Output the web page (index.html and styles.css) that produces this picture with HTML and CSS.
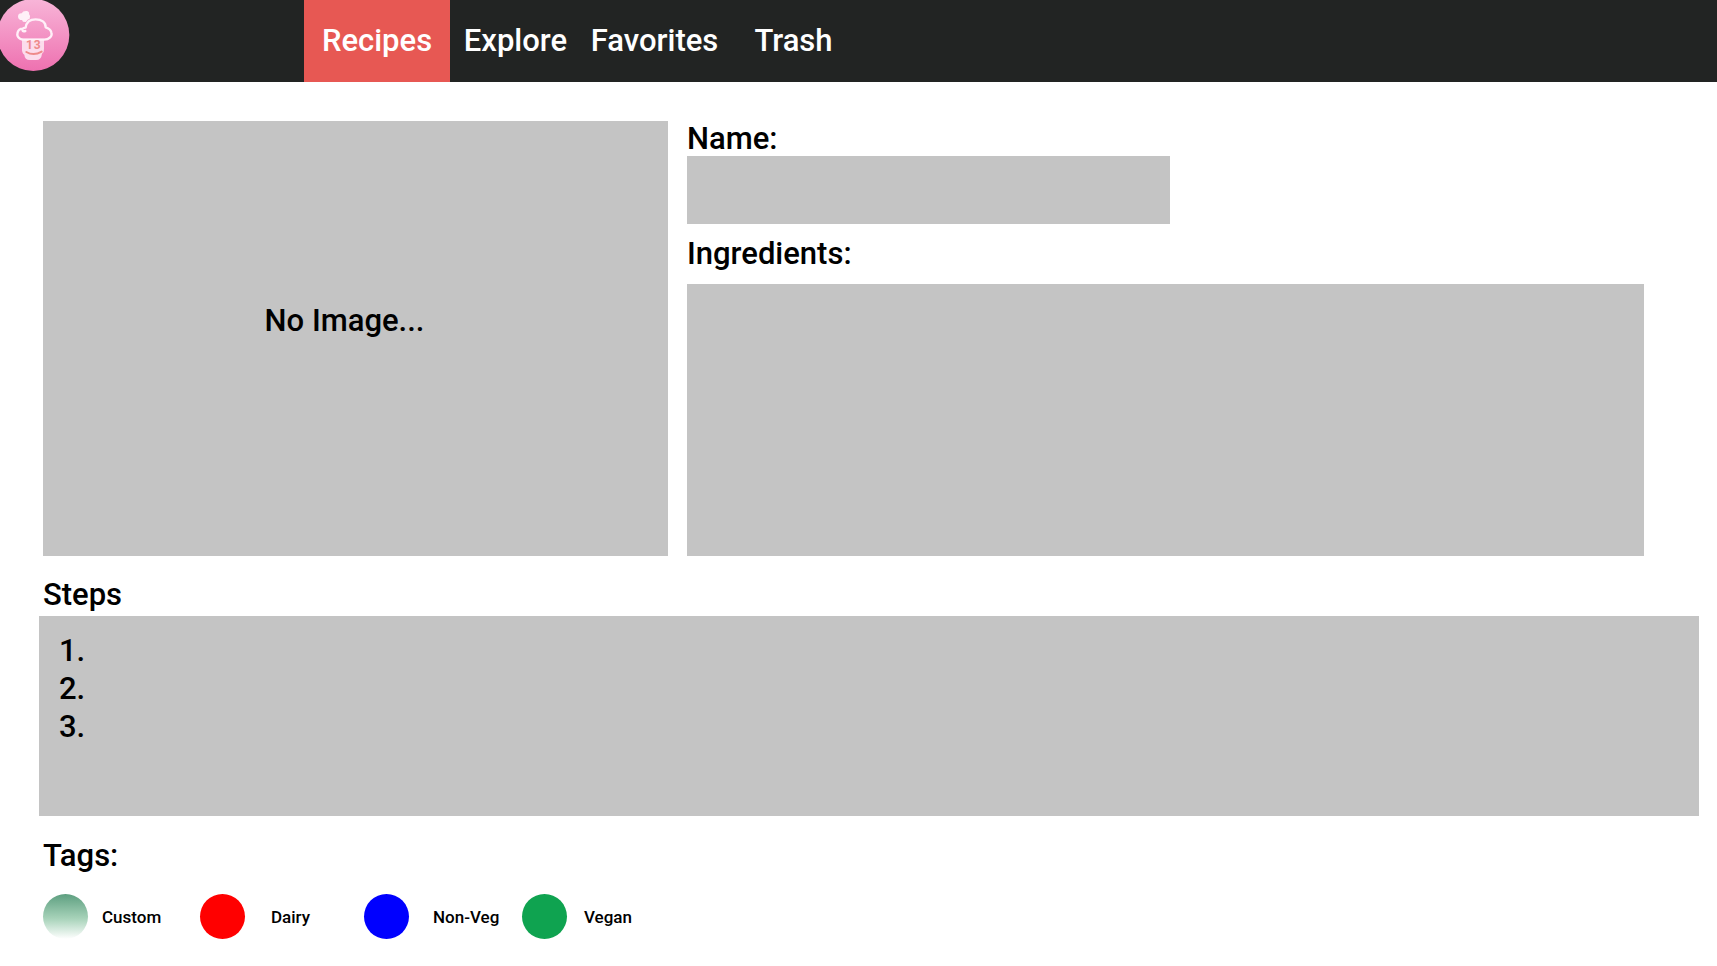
FILE: index.html
```html
<!DOCTYPE html>
<html lang="en">
<head>
<meta charset="utf-8">
<title>Recipes</title>
<meta name="viewport" content="width=device-width, initial-scale=1">
<link rel="stylesheet" href="styles.css">
</head>
<body>
<header class="topbar">
  <a class="logo" href="#" aria-label="Home">
    <svg class="logo-art" viewBox="0 0 210 216" aria-hidden="true">
      <defs>
        <linearGradient id="pink" x1="0" y1="0" x2="0" y2="1">
          <stop offset="0" stop-color="#f8b5d8"/>
          <stop offset="1" stop-color="#ee71b0"/>
        </linearGradient>
      </defs>
      <circle cx="100" cy="105" r="108" fill="url(#pink)"/>
      <path d="M66 116 H132 V146 Q133 155 126 161 Q124 180 108 180 H90 Q74 180 73 164 Q65 158 66 146 Z" fill="#fcdcec"/>
      <path d="M76 93 Q64 96 68 86 C52 86 46 108 60 116 Q64 119 70 119 H132 C148 119 158 108 154 97 Q151 86 137 82 C138 66 124 58 107 58 C91 58 79 66 77 83 Q70 83 68 86" fill="none" stroke="#fff0f8" stroke-width="7" stroke-linejoin="round" stroke-linecap="round"/>
      <path d="M69 65 L66 60 Q55 60 54 50 Q54 39 66 40 Q68 32 81 33 Q89 36 87 42 Q93 48 89 56 Q82 57 78 66 Z" fill="#fff0f8"/>
      <path d="M79 156 Q101 169 125 155" fill="none" stroke="#ee8a8a" stroke-width="6" stroke-linecap="round"/>
      <text class="logo-digits" x="78" y="148">1</text>
      <text class="logo-digits" x="101" y="148">3</text>
    </svg>
  </a>
  <nav class="menu">
    <a class="menu-item menu-item-active" href="#" aria-current="page">Recipes</a>
    <a class="menu-item" href="#">Explore</a>
    <a class="menu-item" href="#">Favorites</a>
    <a class="menu-item" href="#">Trash</a>
  </nav>
</header>
<main class="recipe">
  <section class="summary">
    <div class="photo">No Image...</div>
    <div class="fields">
      <label class="label" for="name">Name:</label>
      <input class="box name-box" id="name" type="text">
      <label class="label label-ingredients" for="ingredients">Ingredients:</label>
      <textarea class="box ingredients-box" id="ingredients"></textarea>
    </div>
  </section>
  <section class="steps">
    <h2 class="label steps-title">Steps</h2>
    <ol class="box steps-box">
      <li>1.</li>
      <li>2.</li>
      <li>3.</li>
    </ol>
  </section>
  <section class="tags">
    <h2 class="label">Tags:</h2>
    <ul class="tag-list">
      <li class="tag"><span class="swatch swatch-custom"></span><span>Custom</span></li>
      <li class="tag"><span class="swatch swatch-dairy"></span><span>Dairy</span></li>
      <li class="tag"><span class="swatch swatch-nonveg"></span><span>Non-Veg</span></li>
      <li class="tag"><span class="swatch swatch-vegan"></span><span>Vegan</span></li>
    </ul>
  </section>
</main>
</body>
</html>
```
FILE: styles.css
```css
* {
  box-sizing: border-box;
}

body {
  margin: 0;
  background: #fff;
  color: #000;
  font-family: Roboto, "Liberation Sans", sans-serif;
  font-size: 31px;
  font-weight: 500;
  line-height: 35px;
}

.topbar {
  display: flex;
  height: 82px;
  background: #222423;
}

.logo {
  width: 307px;
}

.logo-art {
  display: block;
  width: 70px;
  height: 72px;
}

.logo-digits {
  fill: #ee8a8a;
  font-size: 36px;
  font-weight: 700;
}

.menu {
  display: flex;
}

.menu-item {
  display: flex;
  align-items: center;
  justify-content: center;
  width: 139px;
  padding-bottom: 2px;
  color: #fff;
  text-decoration: none;
}

.menu-item-active {
  width: 146px;
  margin: 0 -4px 0 -3px;
  background: #e75853;
}

.recipe {
  padding: 39px 18px 0 39px;
}

.summary {
  display: grid;
  grid-template-columns: 625fr 957fr;
  gap: 19px;
  padding: 0 55px 0 4px;
}

.photo {
  display: flex;
  align-items: center;
  justify-content: center;
  padding: 0 22px 36px 0;
  background: #c4c4c4;
}

.fields {
  display: flex;
  flex-direction: column;
  align-items: flex-start;
}

.label {
  margin: 0;
  font-size: 31px;
  font-weight: 500;
  line-height: 35px;
}

.box {
  display: block;
  margin: 0;
  border: 0;
  border-radius: 0;
  background: #c4c4c4;
  color: inherit;
  font: inherit;
}

.name-box {
  width: 483px;
  max-width: 100%;
  height: 68px;
  padding: 0 20px;
}

.label-ingredients {
  padding: 12px 0 13px;
}

.ingredients-box {
  width: 100%;
  height: 272px;
  padding: 16px 20px;
  resize: none;
}

.steps {
  padding-top: 21px;
}

.steps-title {
  padding: 0 4px 4px;
}

.steps-box {
  min-height: 200px;
  padding: 16px 20px;
  line-height: 38px;
  list-style: none;
}

.tags {
  padding: 22px 4px;
}

.tag-list {
  display: grid;
  grid-template-columns: 59px 98px 71px 93px 69px 89px 62px auto;
  align-items: center;
  justify-content: start;
  margin: 0;
  padding: 21px 0 0;
  font-size: 17px;
  line-height: 20px;
  list-style: none;
}

.tag {
  display: contents;
}

.swatch {
  width: 45px;
  height: 45px;
  border-radius: 50%;
}

.swatch-custom {
  background: linear-gradient(#5d9f80, #a8d3ba 55%, #fff);
}

.swatch-dairy {
  background: #f00;
}

.swatch-nonveg {
  background: #00f;
}

.swatch-vegan {
  background: #0fa350;
}
```
